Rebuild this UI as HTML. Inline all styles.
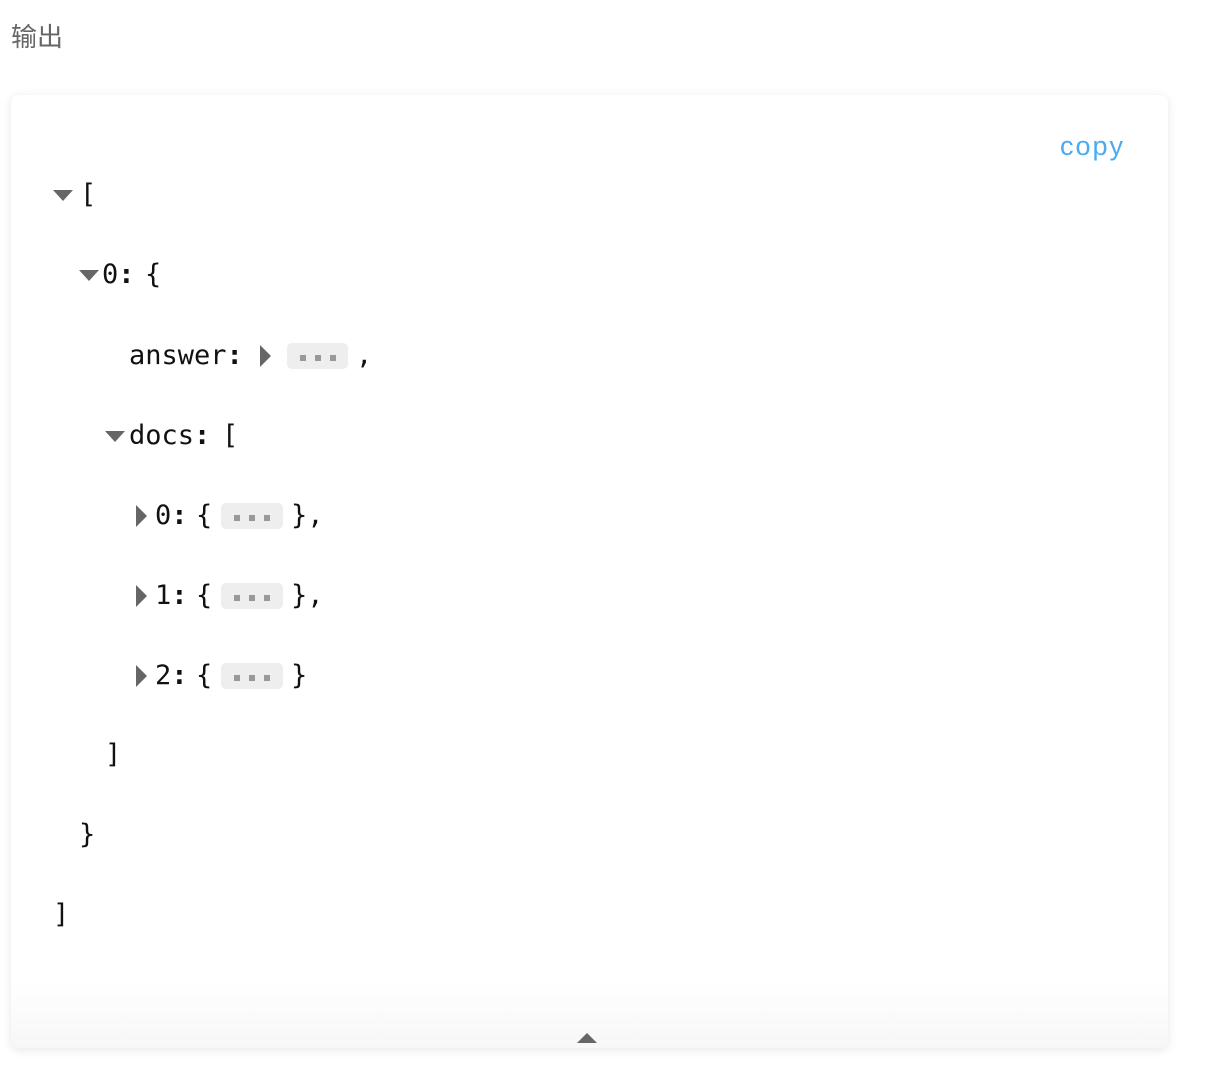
<!DOCTYPE html><html><head><meta charset="utf-8"><style>
body{margin:0;width:1206px;height:1082px;background:#fff;position:relative;overflow:hidden}
.t{position:absolute;left:11px;top:17px;font:26px "Liberation Sans","Noto Sans CJK SC",sans-serif;color:#666}
.card{position:absolute;left:11px;top:95px;width:1157px;height:953px;border-radius:8px;background:#fff;box-shadow:0 2px 10px rgba(0,0,0,.1)}
.fade{position:absolute;left:0;right:0;bottom:0;height:65px;border-radius:0 0 8px 8px;background:linear-gradient(#fff,#f7f7f7)}
.copy{position:absolute;left:1060px;top:131px;font:27px "Liberation Sans",sans-serif;color:#4aabf2;letter-spacing:2px}
.m{position:absolute;font:27px "DejaVu Sans Mono","Liberation Mono",monospace;color:#111;line-height:40px;white-space:pre}
.m b{font-weight:bold}
.td{position:absolute;width:0;height:0;border-left:10px solid transparent;border-right:10px solid transparent;border-top:11px solid #666}
.tr{position:absolute;width:0;height:0;border-top:11px solid transparent;border-bottom:11px solid transparent;border-left:11px solid #666}
.b{position:absolute;height:26px;background:#eee;border-radius:5px;display:flex;justify-content:center;align-items:center;gap:9px}
.b i{width:6px;height:6px;background:#999;display:block;margin-top:4px}
.up{position:absolute;left:577px;top:1033px;width:0;height:0;border-left:10px solid transparent;border-right:10px solid transparent;border-bottom:10px solid #666}
</style></head><body>
<div class="t">输出</div>
<div class="card"><div class="fade"></div></div>
<div class="copy">copy</div>
<div class="td" style="left:53px;top:190px"></div><div class="m" style="left:80px;top:175px">[</div>
<div class="td" style="left:79px;top:270px"></div><div class="m" style="left:102px;top:255px">0<b>:</b></div><div class="m" style="left:145px;top:255px">{</div>
<div class="m" style="left:129px;top:336px">answer<b>:</b></div><div class="tr" style="left:260px;top:345px"></div><div class="b" style="left:287px;top:343px;width:61px"><i></i><i></i><i></i></div><div class="m" style="left:356px;top:336px">,</div>
<div class="td" style="left:105px;top:431px"></div><div class="m" style="left:129px;top:416px">docs<b>:</b></div><div class="m" style="left:222px;top:416px">[</div>
<div class="tr" style="left:136px;top:505px"></div><div class="m" style="left:155px;top:496px">0<b>:</b></div><div class="m" style="left:196px;top:496px">{</div><div class="b" style="left:221px;top:503px;width:62px"><i></i><i></i><i></i></div><div class="m" style="left:291px;top:496px">},</div>
<div class="tr" style="left:136px;top:585px"></div><div class="m" style="left:155px;top:576px">1<b>:</b></div><div class="m" style="left:196px;top:576px">{</div><div class="b" style="left:221px;top:583px;width:62px"><i></i><i></i><i></i></div><div class="m" style="left:291px;top:576px">},</div>
<div class="tr" style="left:136px;top:665px"></div><div class="m" style="left:155px;top:656px">2<b>:</b></div><div class="m" style="left:196px;top:656px">{</div><div class="b" style="left:221px;top:663px;width:62px"><i></i><i></i><i></i></div><div class="m" style="left:291px;top:656px">}</div>
<div class="m" style="left:105px;top:735px">]</div>
<div class="m" style="left:79px;top:815px">}</div>
<div class="m" style="left:53px;top:895px">]</div>
<div class="up"></div>
</body></html>
